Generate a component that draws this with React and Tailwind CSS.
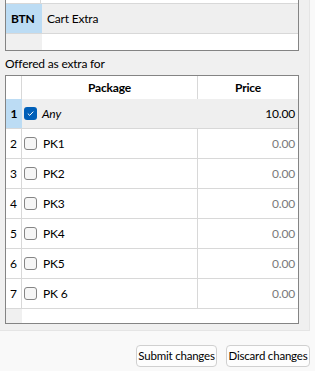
import React from "react";

const rows = [
  { n: 1, name: "Any", price: "10.00", checked: true },
  { n: 2, name: "PK1", price: "0.00" },
  { n: 3, name: "PK2", price: "0.00" },
  { n: 4, name: "PK3", price: "0.00" },
  { n: 5, name: "PK4", price: "0.00" },
  { n: 6, name: "PK5", price: "0.00" },
  { n: 7, name: "PK 6", price: "0.00" },
];

function Check({ checked }) {
  if (checked) {
    return (
      <span className="flex h-[13px] w-[13px] shrink-0 items-center justify-center rounded-[3px] bg-[#005fb8]">
        <svg width="9" height="9" viewBox="0 0 9 9">
          <path d="M1.8 4.6 L3.7 6.4 L7.3 2.6" fill="none" stroke="#ffffff" strokeWidth="1" />
        </svg>
      </span>
    );
  }
  return <span className="block h-[13px] w-[13px] shrink-0 rounded-[3px] border border-[#858585] bg-[#f6f6f6]" />;
}

export default function App() {
  return (
    <div
      className="relative flex h-[371px] w-[315px] flex-col overflow-hidden bg-[#f9f9f9] text-[12px] tracking-[-0.2px] text-[#000000]"
      style={{ fontFamily: 'Lato, "Noto Sans", sans-serif' }}
    >
      <div className="flex h-[331px] w-[310px] flex-col border-b border-r border-[#e5e5e5] bg-[#f0f0f0] pl-[5px]">
        {/* top table (scrolled) */}
        <div className="flex w-[294px] flex-col border-x border-b border-[#848484] bg-white">
          <div className="flex h-[3px]">
            <div className="w-[35px] border-r border-[#d8d8d8] bg-white" />
            <div className="flex-1" />
          </div>
          <div className="h-px bg-[#d8d8d8]" />
          <div className="flex h-[29px]">
            <div className="flex w-[36px] items-center bg-[#bcdcf4] pl-[5px] font-bold">BTN</div>
            <div className="flex flex-1 items-center bg-[#efefef] pl-[5px]">Cart Extra</div>
          </div>
          <div className="h-px bg-[#d8d8d8]" />
          <div className="flex h-[16px]">
            <div className="w-[36px] bg-[#f0f0f0]" />
            <div className="flex-1 bg-white" />
          </div>
        </div>
        <div className="flex h-[24px] items-center pt-[1px] leading-none">Offered as extra for</div>
        {/* second table */}
        <div className="flex w-[294px] flex-col border border-[#848484] bg-white">
          <div className="flex h-[23px]">
            <div className="w-[16px] border-r border-[#d8d8d8] bg-white" />
            <div className="flex w-[176px] items-center justify-center border-r border-[#d8d8d8] font-bold">Package</div>
            <div className="flex flex-1 items-center justify-center font-bold">Price</div>
          </div>
          {rows.map((r) => (
            <div key={r.n} className="flex h-[30px] border-b border-[#d8d8d8]">
              <div
                className={
                  r.checked
                    ? "flex w-[16px] items-center justify-center bg-[#bcdcf4] font-bold"
                    : "flex w-[16px] items-center justify-center border-r border-[#d8d8d8] bg-white"
                }
              >
                {r.n}
              </div>
              <div
                className={
                  r.checked
                    ? "flex w-[176px] items-center gap-[5px] bg-[#efefef] pl-[2px] italic"
                    : "flex w-[176px] items-center gap-[6px] border-r border-[#d8d8d8] pl-[2px]"
                }
              >
                <Check checked={r.checked} />
                <span>{r.name}</span>
              </div>
              <div
                className={
                  r.checked
                    ? "flex flex-1 items-center justify-end bg-[#efefef] pr-[3px]"
                    : "flex flex-1 items-center justify-end pr-[3px] text-[#7a7a7a]"
                }
              >
                {r.price}
              </div>
            </div>
          ))}
          <div className="flex h-[14px]">
            <div className="w-[16px] bg-[#f0f0f0]" />
            <div className="flex-1 bg-white" />
          </div>
        </div>
      </div>
      <div className="flex flex-1 items-start justify-end gap-[9px] pr-[5px] pt-[14px] text-[11.5px]">
        <button className="flex h-[22px] w-[81px] items-center justify-center whitespace-nowrap rounded-[4px] border border-[#d0d0d0] bg-[#fdfdfd] leading-none">
          Submit changes
        </button>
        <button className="flex h-[22px] w-[84px] items-center justify-center whitespace-nowrap rounded-[4px] border border-[#d0d0d0] bg-[#fdfdfd] leading-none">
          Discard changes
        </button>
      </div>
    </div>
  );
}
